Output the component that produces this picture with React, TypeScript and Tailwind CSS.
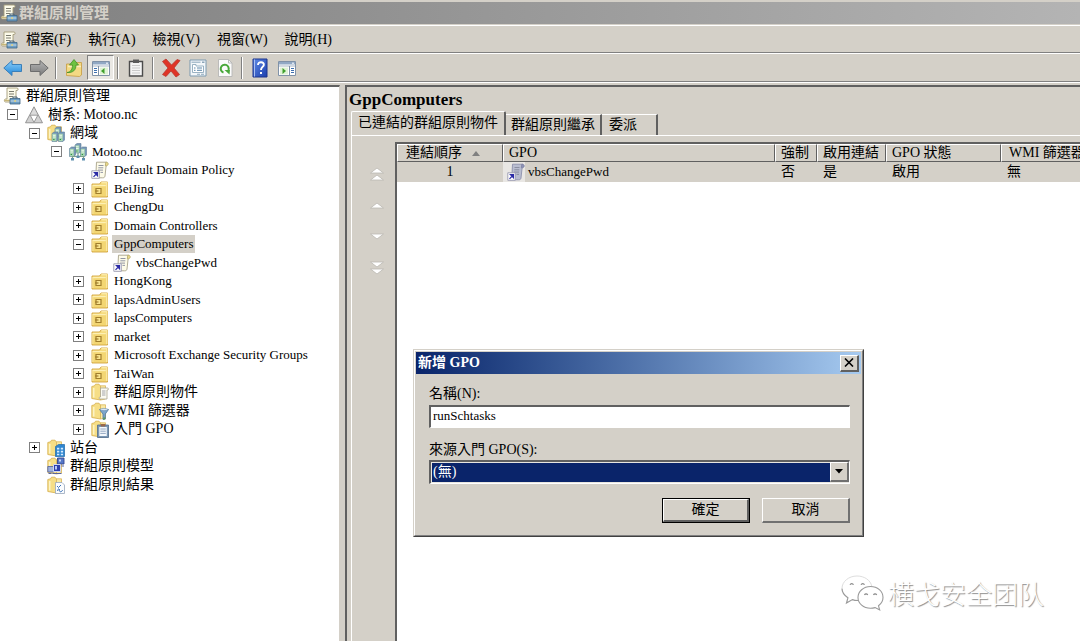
import React, { useState } from "react";

type IconName =
  | "console" | "forest" | "domains" | "domain" | "link" | "ou" | "gpos"
  | "wmi" | "starter" | "sites" | "modeling" | "results";

function Folder() {
  return (
    <>
      <path d="M.8 3.500V15.500l8.700 1.500V3L8 1.200H4.500L3.500 2.800z" fill="#f6de86" stroke="#d6ad4b" strokeWidth="0.8" />
      <path d="M9.500 2.800h5V16l-5 1z" fill="#fae9a4" stroke="#d9b55a" strokeWidth="0.8" />
      <path d="M2.700 5v9.500" stroke="#fdf3c4" strokeWidth="1.600" />
    </>
  );
}

function Scroll({ shaded = false }: { shaded?: boolean }) {
  const paper = shaded ? "#b9bdd0" : "#fdfbe8";
  return (
    <>
      <path d="M5.500 1.200h10L14 15c-.3 1.500-1 1.800-2.300 1.800H3.200c1.200-.4 1.500-1.200 1.600-2z" fill={paper} stroke={shaded ? "#8c90ac" : "#a8a38a"} strokeWidth="0.9" />
      <path d="M14.800 1.200c2.800-.4 3.200 2.600 1 3.600h-1.500z" fill={shaded ? "#8d92b5" : "#ecdc8c"} stroke={shaded ? "#7d82a4" : "#b5a868"} strokeWidth="0.8" />
      <path d="M7.500 4.500h5M7.300 6.800h5M7 9.100h5M9.500 11.400h2.500" stroke="#85899c" strokeWidth="0.9" />
    </>
  );
}

function Server({ x, y }: { x: number; y: number }) {
  return (
    <g transform={`translate(${x} ${y})`}>
      <path d="M0 1.500 2 0h4v8L4.500 9.500H0z" fill="#7698b8" stroke="#5f7d99" strokeWidth="0.6" />
      <path d="M0.300 1.800h4v7.400h-4z" fill="#a6d6b0" />
      <path d="M1 3.300h2.600M1 5h2.600" stroke="#fff" strokeWidth="0.8" />
      <path d="M1.200 7.500h1.300" stroke="#2f8f46" strokeWidth="1" />
    </g>
  );
}

function Icon({ name, shaded }: { name: IconName; shaded?: boolean }) {
  return (
    <svg viewBox="0 0 18 18" className="h-[18px] w-[18px] shrink-0" aria-hidden="true">
      {name === "console" && (
        <>
          <path d="M4 1h10c1.500 0 1.500 2.500 0 2.500h-1V15H2.500C1 15 1 12 2.500 12H4z" fill="#fdfbea" stroke="#a39a78" strokeWidth="0.9" />
          <path d="M6 4.500h5M6 7h5M6 9.500h4" stroke="#7c7c70" strokeWidth="1" />
          <path d="M1.500 13.500h6" stroke="#c8b678" strokeWidth="1.500" />
          <path d="M10 11.500V10h4v1.500" fill="none" stroke="#4d6478" strokeWidth="1" />
          <path d="M7 11.500h10V17H7z" fill="#6f9fc4" stroke="#3f6685" strokeWidth="0.8" />
          <path d="M7.500 14h9" stroke="#d7e6f2" strokeWidth="0.9" />
          <path d="M11.200 13.300h1.800v1.500h-1.800z" fill="#e9d47a" />
        </>
      )}
      {name === "forest" && (
        <>
          <path d="M9 .8 17.500 16.800H.5z" fill="#c9c9c9" stroke="#8d8d8d" strokeWidth="0.9" />
          <path d="M9 2.500 12.500 9h-7z" fill="#dcdcdc" />
          <path d="M5 10 8.300 16H1.800zM13 10l3.300 6H9.800z" fill="#d2d2d2" />
          <path d="M5.200 9.200h7.600L9 16.300z" fill="#fff" stroke="#8a8a8a" strokeWidth="0.8" />
        </>
      )}
      {name === "domains" && (
        <>
          <Folder />
          <Server x={8} y={3} />
          <Server x={5} y={8} />
          <Server x={11.500} y={8} />
        </>
      )}
      {name === "domain" && (
        <>
          <Server x={6} y={0.500} />
          <Server x={0.500} y={4} />
          <Server x={11.500} y={4} />
          <path d="M3.500 16.500V13.500h11v3M9 10v4" fill="none" stroke="#7ba08a" strokeWidth="1.200" />
          <path d="M2 15h3v2.500H2zM13 15h3v2.500h-3zM7.500 12.500h3v2.500h-3z" fill="#5f8fae" />
        </>
      )}
      {name === "link" && (
        <>
          <Scroll shaded={shaded} />
          <path d="M.8 9.800h7.500v7.500H.8z" fill="#fff" stroke="#9a9ab0" strokeWidth="0.9" />
          <path d="M2.500 15.800 5.300 13M3.500 11.700h3v3z" fill="#2b2ba6" stroke="#2b2ba6" strokeWidth="1.200" />
        </>
      )}
      {name === "ou" && (
        <>
          <path d="M1 4v13h15.500V2H10L8.500 4z" fill="#f3d673" stroke="#d3a540" strokeWidth="0.9" />
          <path d="M10.300 2.800h5.500V16" fill="none" stroke="#fbe9a4" strokeWidth="1.400" />
          <path d="M1.800 5.500h13" stroke="#fdf0b4" strokeWidth="1.400" />
          <path d="M1.800 5v11" stroke="#fbeaa6" strokeWidth="0.900" />
          <path d="M5 8.500h5v5H5z" fill="#f9e48f" stroke="#a07d2c" strokeWidth="1.200" />
          <path d="M4 11h3.500" stroke="#a07d2c" strokeWidth="1.200" />
        </>
      )}
      {name === "gpos" && (
        <>
          <Folder />
          <path d="M9.500 5h7c1.300 0 1.300 2 0 2h-.5v9H9c-1.300 0-1.300-2 0-2h.5z" fill="#fbfaf0" stroke="#a9a58f" strokeWidth="0.8" />
          <path d="M11 8h3.500M11 10h3.500M11 12h3.500" stroke="#8f919b" strokeWidth="0.8" />
        </>
      )}
      {name === "wmi" && (
        <>
          <Folder />
          <path d="M8.500 7.500h9L14.300 12v5l-2.300.5V12z" fill="#7ea6cc" stroke="#4c779f" strokeWidth="0.8" />
          <path d="M8.700 7.500c1.500-1.500 7-1.500 8.600 0-1.500 1.500-7 1.500-8.600 0z" fill="#dbe8f4" stroke="#6c8fb0" strokeWidth="0.6" />
          <path d="M12.300 15.500h2v2h-2z" fill="#5d9b52" />
        </>
      )}
      {name === "starter" && (
        <>
          <Folder />
          <path d="M6.500 5h11v12.500h-11z" fill="#7b97b5" stroke="#4f6b8a" strokeWidth="0.8" />
          <path d="M8.300 7h7.500v9H8.300z" fill="#f4f8fc" />
          <path d="M9.800 4h4.500v2.500H9.800z" fill="#9b674a" />
          <path d="M9.300 9h5.500M9.300 11.200h5.500M9.300 13.400h5.500" stroke="#7b93b3" strokeWidth="0.8" />
        </>
      )}
      {name === "sites" && (
        <>
          <Folder />
          <path d="M8.500 7.500 11.500 5.500h6V17.500h-9z" fill="#2f86d0" stroke="#2069a8" strokeWidth="0.7" />
          <path d="M10 8.800h2.300v1.600H10zM13.800 8.800h2.300v1.600h-2.300zM10 11.800h2.300v1.600H10zM13.800 11.800h2.300v1.600h-2.300zM10 14.800h2.300v1.400H10zM13.800 14.800h2.300v1.400h-2.300z" fill="#d5ecff" />
        </>
      )}
      {name === "modeling" && (
        <>
          <Folder />
          <path d="M10.500 1h6.500v6h-6.500z" fill="#5577c8" stroke="#33468f" strokeWidth="0.9" />
          <path d="M.8 9.500h6.500v5.500H.8z" fill="#9fb2dc" stroke="#5a6aa4" strokeWidth="0.9" />
          <path d="M6.500 7.500h7v7h-7z" fill="#2c3fae" stroke="#d0d6ee" strokeWidth="1" />
          <path d="M8 9h2v3.500H8z" fill="#b8c8f5" />
          <path d="M12 2.500h2v2h-2z" fill="#c9d7f7" />
          <path d="M5.500 16.500h9M1.500 16.500h3M14.500 9h2.500" stroke="#59659a" strokeWidth="1.200" />
        </>
      )}
      {name === "results" && (
        <>
          <Folder />
          <path d="M8.500 6.500h6.500l2.500 2.500v8.500h-9z" fill="#fafcff" stroke="#98a7bb" strokeWidth="0.8" />
          <path d="m10 10 1.500 1.500L14 9M10.500 15l1-2.500M12.500 13c-1 3.500 2.500 3.500 3 1" fill="none" stroke="#3d74b8" strokeWidth="1" />
        </>
      )}
    </svg>
  );
}

type ToolName = "back" | "forward" | "up" | "tree" | "clipboard" | "delete" | "properties" | "refresh" | "help" | "action";

function ToolIcon({ name }: { name: ToolName }) {
  return (
    <svg viewBox="0 0 20 20" className="h-[20px] w-[20px]" aria-hidden="true">
      <defs>
        <linearGradient id="blueArrow" x1="0" y1="0" x2="0" y2="1">
          <stop offset="0" stopColor="#8fd0fb" /><stop offset="1" stopColor="#1f86d8" />
        </linearGradient>
        <linearGradient id="greyArrow" x1="0" y1="0" x2="0" y2="1">
          <stop offset="0" stopColor="#b5b5b5" /><stop offset="1" stopColor="#7b7b7b" />
        </linearGradient>
        <linearGradient id="helpBlue" x1="0" y1="0" x2="1" y2="1">
          <stop offset="0" stopColor="#5f8be6" /><stop offset="1" stopColor="#1c3fae" />
        </linearGradient>
      </defs>
      {name === "back" && <path d="M.8 10 9 2.500v4h9.500v7H9v4z" fill="url(#blueArrow)" stroke="#3b7fb8" strokeWidth="1" strokeLinejoin="round" />}
      {name === "forward" && <path d="M19.200 10 11 2.500v4H1.500v7H11v4z" fill="url(#greyArrow)" stroke="#6d6d6d" strokeWidth="1" strokeLinejoin="round" />}
      {name === "up" && (
        <>
          <path d="M2.500 6v11.500l13 1 2-1.500V4.500h-6L10 6z" fill="#f3d983" stroke="#c9a24c" strokeWidth="0.9" />
          <path d="M4 8.500h13" stroke="#fbeeb9" strokeWidth="1.500" />
          <path d="M3 14.500c4-.5 5.500-3.500 5.500-7.500H5.500L10 1.500l4.500 5.500h-2.500c0 5-3 8-9 7.500z" fill="#6fc241" stroke="#43912a" strokeWidth="0.8" />
        </>
      )}
      {(name === "tree" || name === "action") && (
        <>
          <path d="M1.500 3.500h17v14h-17z" fill="#fff" stroke="#8092a8" strokeWidth="1" />
          <path d="M2 4h16v2.500H2z" fill="#91a8c4" />
          <path d="M2 8h16" stroke="#a7b4c4" strokeWidth="1" />
          <path d="M15 5.200h2" stroke="#fff" strokeWidth="1" />
          {name === "tree" ? (
            <>
              <path d="M7.500 8v9.500" stroke="#8092a8" />
              <path d="M3 10.500h3M3 12.500h3M3 14.500h3" stroke="#3f70b0" strokeWidth="1" />
              <path d="M9 9.500h8v7H9z" fill="#dff2d5" />
              <path d="M13.500 10v6l-3.500-3z" fill="#3fa02c" />
            </>
          ) : (
            <>
              <path d="M12.500 8v9.500" stroke="#8092a8" />
              <path d="M14 10.500h3M14 12.500h3M14 14.500h3" stroke="#3f70b0" strokeWidth="1" />
              <path d="M3 9.500h8v7H3z" fill="#dff2d5" />
              <path d="M5.500 10v6L9 13z" fill="#3fa02c" />
            </>
          )}
        </>
      )}
      {name === "clipboard" && (
        <>
          <path d="M3.500 3.500h13v14.500h-13z" fill="#f4f4f4" stroke="#4c4c4c" strokeWidth="1.400" />
          <path d="M7 1.500h6V5H7z" fill="#5a5a5a" />
          <path d="M6 7.500h8M6 10h8M6 12.500h8M6 15h8" stroke="#c5c5c5" strokeWidth="0.9" />
        </>
      )}
      {name === "delete" && (
        <path d="M1.500 3.500 5 1l5.500 6L16 1.500l3 1L13 10l5.500 6.500-3.500 2.500L10 13l-5 5.500-3.500-2L7 10z" fill="#df3426" stroke="#b5382e" strokeWidth="0.8" strokeLinejoin="round" />
      )}
      {name === "properties" && (
        <>
          <path d="M2 2h16v16H2z" fill="#f3f7fa" stroke="#7d9ab0" strokeWidth="1" />
          <path d="M3.500 4.200h9" stroke="#8aa5ba" strokeWidth="1" />
          <path d="M14 4.200h2.500" stroke="#7190a8" strokeWidth="1.200" />
          <path d="M4.500 6.500h3.500v1.500h7.500v6.500h-11z" fill="#fff" stroke="#8ea9bc" strokeWidth="0.9" />
          <path d="M6 10h1.500M9 10h5M6 12.300h1.500M9 12.300h5" stroke="#5c86a8" strokeWidth="1" />
          <path d="M9 16.300h3M13 16.300h3" stroke="#8ea9bc" strokeWidth="1.100" />
        </>
      )}
      {name === "refresh" && (
        <>
          <path d="M3.500 1.500h10l3.500 3.500v13.500H3.500z" fill="#fbfbfb" stroke="#b6b6b6" strokeWidth="0.9" />
          <path d="M13.500 1.500V5H17" fill="none" stroke="#b6b6b6" strokeWidth="0.9" />
          <path d="M8.500 14.500a4 4 0 1 1 5-2.500" fill="none" stroke="#49a83a" strokeWidth="2" />
          <path d="M9.500 12H15l-.5 4.500z" fill="#49a83a" />
        </>
      )}
      {name === "help" && (
        <>
          <path d="M3 1h14v18H3z" fill="url(#helpBlue)" stroke="#1d358c" strokeWidth="1" />
          <path d="M4.500 1.500v17" stroke="#a9bff2" strokeWidth="1" />
          <path d="M8 7c0-4 6.500-3.500 5.800 0-.4 2-2.800 2.200-2.800 5" fill="none" stroke="#fff" strokeWidth="1.900" />
          <path d="M10 14h2v2h-2z" fill="#fff" />
        </>
      )}
    </svg>
  );
}

interface Node {
  level: 0 | 1 | 2 | 3 | 4 | 5;
  icon: IconName;
  label: string;
  latin?: boolean;
  state?: "open" | "closed";
  selected?: boolean;
}

const nodes: Node[] = [
  { level: 0, icon: "console", label: "群組原則管理" },
  { level: 1, icon: "forest", label: "樹系: Motoo.nc", state: "open" },
  { level: 2, icon: "domains", label: "網域", state: "open" },
  { level: 3, icon: "domain", label: "Motoo.nc", latin: true, state: "open" },
  { level: 4, icon: "link", label: "Default Domain Policy", latin: true },
  { level: 4, icon: "ou", label: "BeiJing", latin: true, state: "closed" },
  { level: 4, icon: "ou", label: "ChengDu", latin: true, state: "closed" },
  { level: 4, icon: "ou", label: "Domain Controllers", latin: true, state: "closed" },
  { level: 4, icon: "ou", label: "GppComputers", latin: true, state: "open", selected: true },
  { level: 5, icon: "link", label: "vbsChangePwd", latin: true },
  { level: 4, icon: "ou", label: "HongKong", latin: true, state: "closed" },
  { level: 4, icon: "ou", label: "lapsAdminUsers", latin: true, state: "closed" },
  { level: 4, icon: "ou", label: "lapsComputers", latin: true, state: "closed" },
  { level: 4, icon: "ou", label: "market", latin: true, state: "closed" },
  { level: 4, icon: "ou", label: "Microsoft Exchange Security Groups", latin: true, state: "closed" },
  { level: 4, icon: "ou", label: "TaiWan", latin: true, state: "closed" },
  { level: 4, icon: "gpos", label: "群組原則物件", state: "closed" },
  { level: 4, icon: "wmi", label: "WMI 篩選器", state: "closed" },
  { level: 4, icon: "starter", label: "入門 GPO", state: "closed" },
  { level: 2, icon: "sites", label: "站台", state: "closed" },
  { level: 2, icon: "modeling", label: "群組原則模型" },
  { level: 2, icon: "results", label: "群組原則結果" },
];

const indent = {
  0: "pl-px",
  1: "pl-px",
  2: "pl-[23px]",
  3: "pl-[45px]",
  4: "pl-[67px]",
  5: "pl-[89px]",
};

function TreeRow({ node }: { node: Node }) {
  return (
    <li className={`flex min-h-0 items-center ${indent[node.level]}`}>
      {node.level > 0 && (
        <span className="flex w-[22px] shrink-0 justify-center">
          {node.state && (
            <button type="button" aria-label={node.state === "open" ? "收合" : "展開"} className="flex h-[11px] w-[11px] items-center justify-center border border-[#808080] bg-white">
              <svg viewBox="0 0 9 9" className="h-[9px] w-[9px] shrink-0" aria-hidden="true">
                <path d={node.state === "open" ? "M2 4.500h5" : "M2 4.500h5M4.500 2v5"} stroke="#000" />
              </svg>
            </button>
          )}
        </span>
      )}
      <span className="flex w-[22px] shrink-0 justify-center">
        <Icon name={node.icon} />
      </span>
      <span className={`ml-px flex h-[18px] items-center px-[2px] whitespace-nowrap ${node.latin ? "text-[13px]" : ""} ${node.selected ? "bg-[#d4d0c8]" : ""}`}>{node.label}</span>
    </li>
  );
}

const menus = ["檔案(F)", "執行(A)", "檢視(V)", "視窗(W)", "說明(H)"];

function ToolButton({ name, label, pressed }: { name: ToolName; label: string; pressed?: boolean }) {
  return (
    <button
      type="button"
      aria-label={label}
      className={`flex h-[25px] items-center justify-center ${name === "back" || name === "forward" ? "w-[26px]" : "w-[27px]"} ${pressed ? "border border-t-[#808080] border-r-white border-b-white border-l-[#808080] bg-[#eae8e4]" : ""}`}
    >
      <ToolIcon name={name} />
    </button>
  );
}

function Separator() {
  return (
    <span className="flex w-[8px] justify-center">
      <span className="h-[22px] w-[2px] border-r border-l border-r-white border-l-[#808080]" />
    </span>
  );
}

function OrderButton({ label, d }: { label: string; d: string }) {
  return (
    <button type="button" aria-label={label} className="flex h-[31px] w-full items-center justify-center">
      <svg viewBox="0 0 18 18" className="h-[18px] w-[18px]" aria-hidden="true">
        <path d={d} fill="#fff" stroke="#bab7b1" strokeWidth="0.8" />
      </svg>
    </button>
  );
}

const headCell =
  "h-[18px] overflow-hidden border-t border-r border-b border-l border-t-white border-r-[#606060] border-b-[#606060] border-l-white p-0 px-[5px] text-left leading-[16px] font-normal whitespace-nowrap";

function NewGpoDialog() {
  const [name, setName] = useState("runSchtasks");
  return (
    <section
      role="dialog"
      aria-labelledby="dialog-title"
      className="absolute top-[349px] left-[413px] w-[451px] border border-t-[#d4d0c8] border-r-[#404040] border-b-[#404040] border-l-[#d4d0c8] bg-[#d4d0c8]"
    >
      <div className="border border-t-white border-r-[#808080] border-b-[#808080] border-l-white p-px">
        <header className="flex h-[22px] items-center justify-between bg-linear-to-r from-[#0a246a] to-[#a6caf0] pr-[2px] pl-[2px]">
          <h2 id="dialog-title" className="text-[14px] font-bold text-white">新增 GPO</h2>
          <button type="button" aria-label="關閉" className="flex h-[17px] w-[19px] items-center justify-center border-t border-r-2 border-b-2 border-l border-t-white border-r-[#606060] border-b-[#606060] border-l-white bg-[#d4d0c8]">
            <svg viewBox="0 0 10 9" className="h-[9px] w-[10px]" aria-hidden="true">
              <path d="m1 .5 8 8m0-8-8 8" stroke="#000" strokeWidth="1.600" />
            </svg>
          </button>
        </header>
        <form className="flex flex-col pt-[10px] pr-[11px] pb-[11px] pl-[13px]" onSubmit={(e) => e.preventDefault()}>
          <label htmlFor="gpo-name" className="h-[21px] leading-[20px]">名稱(N):</label>
          <input
            id="gpo-name"
            value={name}
            onChange={(e) => setName(e.target.value)}
            className="h-[23px] border-t-2 border-r border-b border-l-2 border-t-[#606060] border-r-white border-b-white border-l-[#606060] bg-white px-[2px] pb-[2px] text-[13px] outline-none"
          />
          <label htmlFor="gpo-source" className="mt-[12px] h-[20px] leading-[20px]">來源入門 GPO(S):</label>
          <div className="relative flex h-[24px] border-t-2 border-r border-b border-l-2 border-t-[#606060] border-r-white border-b-white border-l-[#606060] bg-[#e8e6e0] p-px">
            <select id="gpo-source" className="w-full appearance-none rounded-none bg-[#0a246a] pr-[20px] pb-[2px] pl-px text-white outline-none">
              <option>(無)</option>
            </select>
            <span className="pointer-events-none absolute top-0 right-0 flex h-[20px] w-[19px] items-center justify-center border-t border-r-2 border-b-2 border-l border-t-white border-r-[#707070] border-b-[#707070] border-l-white bg-[#d4d0c8]">
              <svg viewBox="0 0 8 5" className="h-[5px] w-[8px]" aria-hidden="true">
                <path d="M0 0h8L4 4.500z" fill="#000" />
              </svg>
            </span>
          </div>
          <div className="mt-[14px] flex justify-end gap-[12px]">
            <button type="submit" className="h-[25px] w-[88px] border border-black bg-[#d4d0c8]">
              <span className="flex h-full items-center justify-center border-t border-r-2 border-b-2 border-l border-t-white border-r-[#606060] border-b-[#606060] border-l-white">確定</span>
            </button>
            <button type="button" className="h-[25px] w-[88px] border-t border-r-2 border-b-2 border-l border-t-white border-r-[#707070] border-b-[#707070] border-l-white bg-[#d4d0c8]">取消</button>
          </div>
        </form>
      </div>
    </section>
  );
}

function Watermark() {
  return (
    <div className="pointer-events-none absolute right-[36px] bottom-[29px] flex items-center gap-[4px] font-['Noto_Sans_CJK_SC',sans-serif] text-[26px] leading-[36px] font-light text-white [text-shadow:1px_1px_1px_#8c8c8c]">
      <svg viewBox="0 0 44 38" className="h-[38px] w-[44px]" aria-hidden="true">
        <path d="M18 26.500c-2 0-4-.2-5.600-.9L6.500 29l1.400-5.200C4.500 21.500 2 18.200 2 14.500" fill="none" stroke="#9a9a9a" strokeWidth="1.200" />
        <path d="M2 14.500C2 7.600 8.700 2 17 2c7.500 0 13.600 4.300 14.800 10.300" fill="none" stroke="#dedede" strokeWidth="1" />
        <path d="M30.500 12.500c7 0 12.500 4.800 12.500 11 0 3.500-1.800 6.200-4.500 8.300l1.200 4.200-4.600-2.400c-1.400.4-3 .7-4.600.7C23.500 34.300 18 29.500 18 23.500s5.500-11 12.500-11z" fill="#fff" stroke="#9a9a9a" strokeWidth="1.100" />
        <path d="M10 10.800c.8-1.700 2.700-1.700 3.500 0M21 10.800c.8-1.700 2.700-1.700 3.500 0M24.500 21c.7-1.500 2.400-1.500 3.200 0M33.500 21c.7-1.500 2.400-1.500 3.200 0" fill="none" stroke="#8a8a8a" strokeWidth="1.200" />
      </svg>
      <span>横戈安全团队</span>
    </div>
  );
}

export default function App() {
  return (
    <div className="relative flex min-h-screen flex-col overflow-hidden bg-[#d4d0c8] font-['Liberation_Serif','Noto_Sans_CJK_TC',serif] text-[14px] leading-[18px] text-black">
      <header className="mt-[2px] flex h-[22px] items-center gap-px bg-linear-to-r from-[#808080] to-[#b4b4b4] text-[#d4d0c8]">
        <Icon name="console" />
        <h1 className="text-[15px] font-bold">群組原則管理</h1>
      </header>
      <nav aria-label="選單" className="mt-px flex h-[28px] items-center border-t border-b border-t-white border-b-[#808080] pt-px">
        <Icon name="console" />
        <div className="ml-[8px] flex gap-[17px]">
          {menus.map((m) => (
            <button type="button" key={m}>{m}</button>
          ))}
        </div>
      </nav>
      <div role="toolbar" aria-label="工具列" className="flex h-[29px] items-center border-t border-b border-t-white border-b-[#808080]">
        <ToolButton name="back" label="上一頁" />
        <ToolButton name="forward" label="下一頁" />
        <Separator />
        <ToolButton name="up" label="上移一層" />
        <ToolButton name="tree" label="顯示主控台樹狀目錄" pressed />
        <Separator />
        <ToolButton name="clipboard" label="複製" />
        <Separator />
        <ToolButton name="delete" label="刪除" />
        <ToolButton name="properties" label="內容" />
        <ToolButton name="refresh" label="重新整理" />
        <Separator />
        <ToolButton name="help" label="說明" />
        <ToolButton name="action" label="顯示執行窗格" />
      </div>

      <div className="flex flex-1 gap-[5px] border-t border-white pt-[2px]">
        <aside className="w-[340px] shrink-0 border-t-2 border-r border-t-[#606060] border-r-[#d4d0c8] bg-white">
          <ul className="grid h-[407px] auto-rows-fr">
            {nodes.map((n) => (
              <TreeRow key={n.label + n.level} node={n} />
            ))}
          </ul>
        </aside>

        <main className="flex min-w-0 flex-1 flex-col border-t-2 border-l-2 border-[#606060]">
          <h2 className="h-[24px] pl-[2px] text-[17px] leading-[26px] font-bold">GppComputers</h2>
          <div role="tablist" className="flex items-end pl-[4px]">
            <button type="button" role="tab" aria-selected="true" className="h-[24px] w-[155px] rounded-t-[2px] border-t border-r-2 border-l border-t-white border-r-[#606060] border-l-white pb-[2px]">已連結的群組原則物件</button>
            <button type="button" role="tab" aria-selected="false" className="h-[21px] w-[96px] border-t border-r-2 border-t-white border-r-[#606060]">群組原則繼承</button>
            <button type="button" role="tab" aria-selected="false" className="h-[21px] w-[56px] border-t border-r-2 border-t-white border-r-[#606060] pr-[12px]">委派</button>
          </div>
          <div role="tabpanel" className="ml-[4px] flex flex-1 border-l border-white">
            <div className="flex w-[43px] shrink-0 flex-col border-t border-white pt-[22px] pl-[7px]">
              <OrderButton label="移到最上" d="M2.500 8 9 3l6.500 5zM2.500 15 9 10l6.500 5z" />
              <OrderButton label="上移" d="M2.500 12 9 7l6.500 5z" />
              <OrderButton label="下移" d="M2.500 7h13L9 12z" />
              <OrderButton label="移到最下" d="M2.500 4h13L9 9zM2.500 11h13L9 16z" />
            </div>
            <div className="flex min-w-0 flex-1 flex-col border-t border-white pt-[6px]">
              <div className="flex-1 overflow-hidden border-t-2 border-l-2 border-[#606060] bg-white">
                <table className="w-[804px] table-fixed border-separate border-spacing-0">
                  <colgroup>
                    <col className="w-[106px]" />
                    <col className="w-[272px]" />
                    <col className="w-[42px]" />
                    <col className="w-[69px]" />
                    <col className="w-[115px]" />
                    <col className="w-[200px]" />
                  </colgroup>
                  <thead className="bg-[#d4d0c8]">
                    <tr>
                      <th className={headCell}>
                        <span className="flex items-center gap-[10px] pl-[3px]">
                          連結順序
                          <svg viewBox="0 0 8 5" className="h-[5px] w-[8px]" aria-hidden="true">
                            <path d="M0 5h8L4 0z" fill="#808080" />
                          </svg>
                        </span>
                      </th>
                      <th className={headCell}>GPO</th>
                      <th className={headCell}>強制</th>
                      <th className={headCell}>啟用連結</th>
                      <th className={headCell}>GPO 狀態</th>
                      <th className={`${headCell} pl-[7px]`}>WMI 篩選器</th>
                    </tr>
                  </thead>
                  <tbody className="bg-[#d4d0c8]">
                    <tr className="h-[20px]">
                      <td className="p-0 text-center">1</td>
                      <td className="p-0">
                        <span className="flex h-[20px] items-center gap-[3px] text-[13px]">
                          <span className="flex h-[20px] w-[22px] items-center justify-end bg-[#e9e7e4]">
                            <Icon name="link" shaded />
                          </span>
                          vbsChangePwd
                        </span>
                      </td>
                      <td className="p-0 pl-[6px]">否</td>
                      <td className="p-0 pl-[6px]">是</td>
                      <td className="p-0 pl-[6px]">啟用</td>
                      <td className="p-0 pl-[6px]">無</td>
                    </tr>
                  </tbody>
                </table>
              </div>
            </div>
          </div>
        </main>
      </div>

      <NewGpoDialog />
      <Watermark />
    </div>
  );
}
